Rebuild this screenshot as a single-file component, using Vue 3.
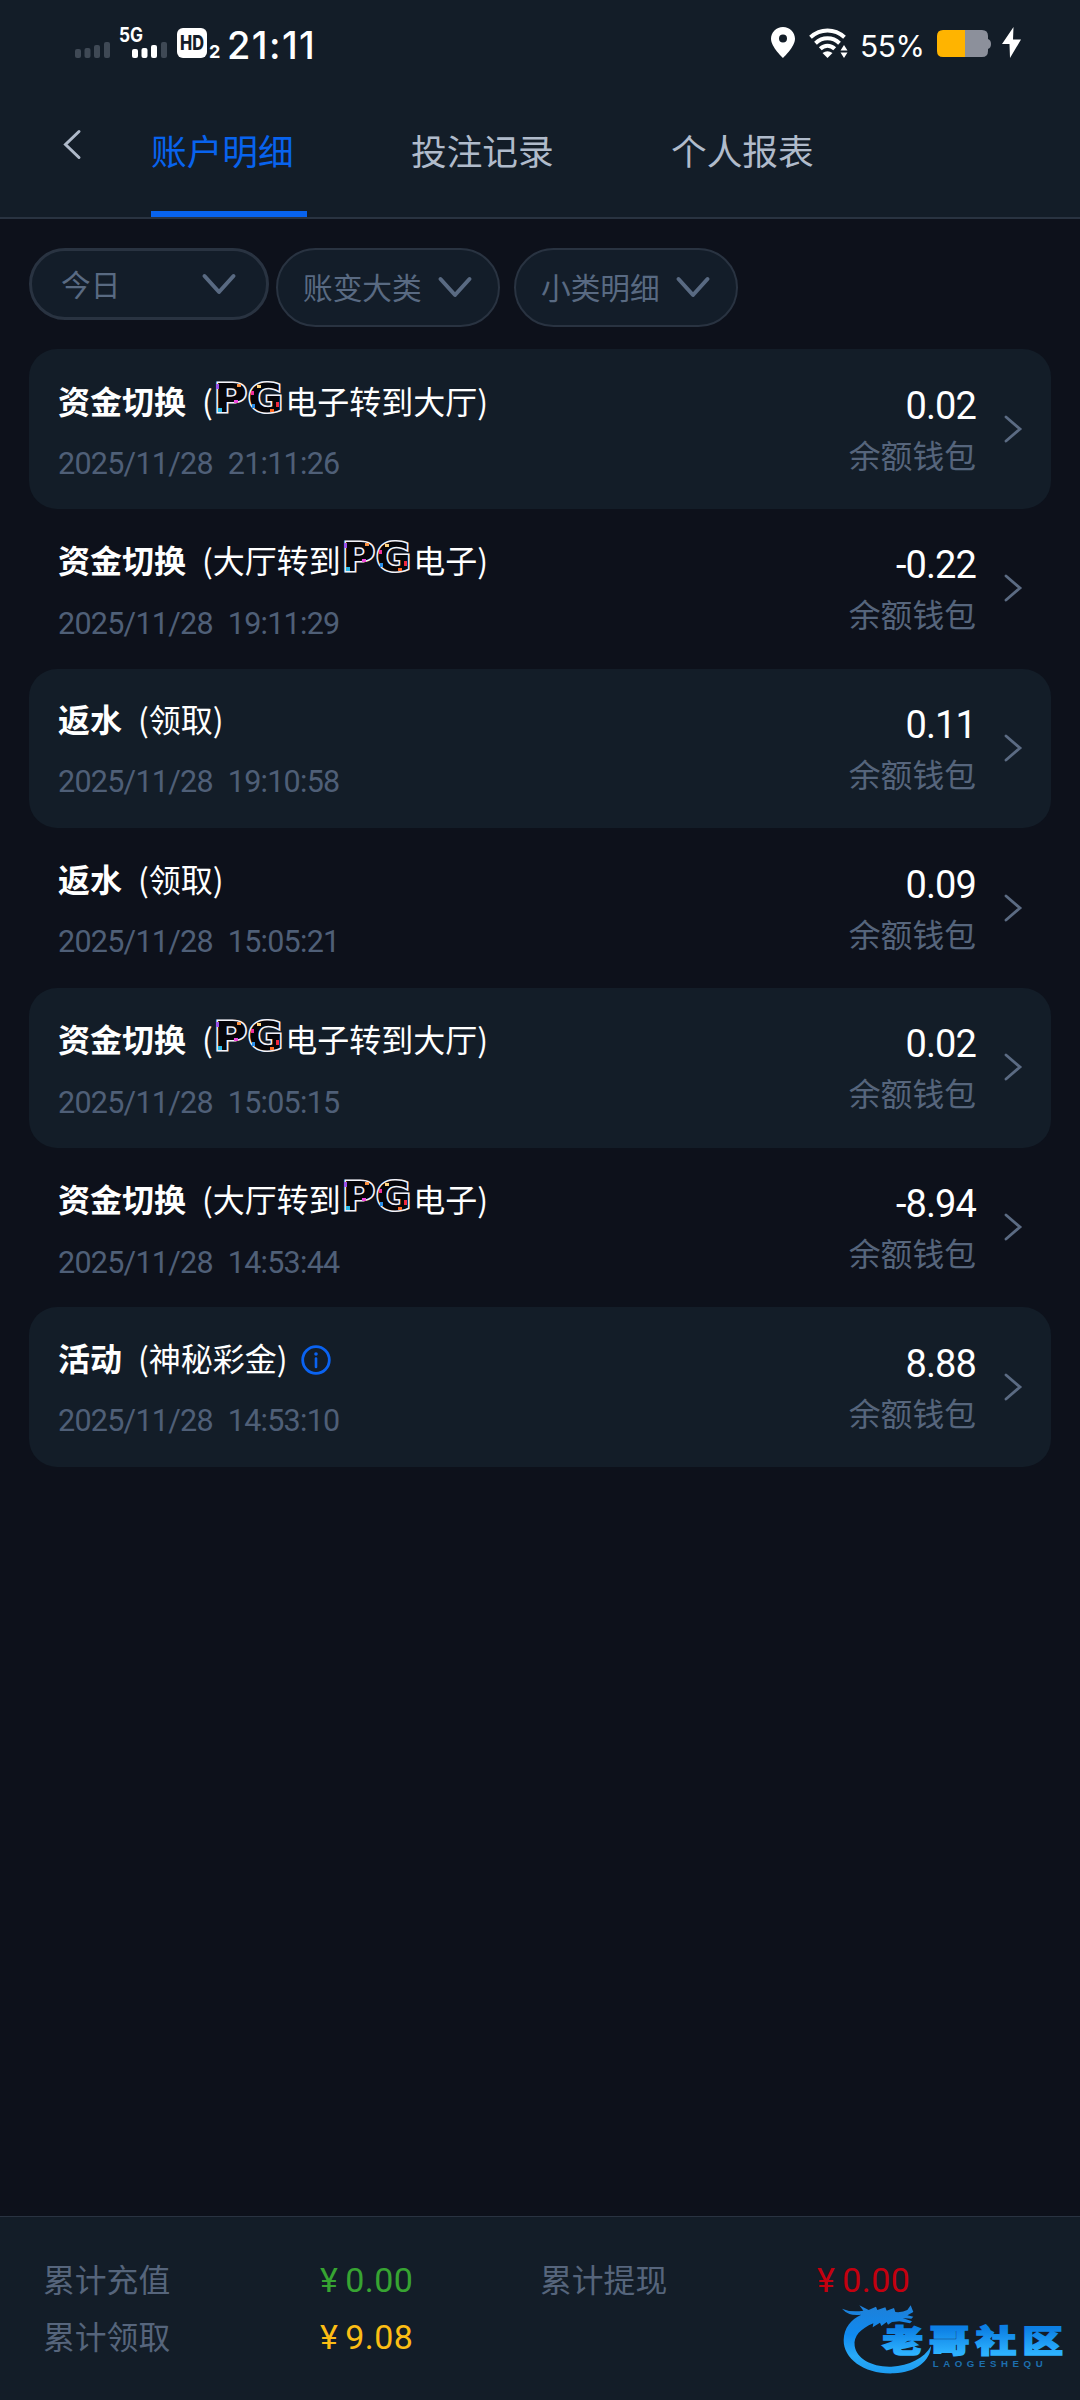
<script setup>
import { ref } from "vue";

const activeTab = ref(0);
const tabs = ["账户明细", "投注记录", "个人报表"];

const filters = [
  { label: "今日", wide: true },
  { label: "账变大类" },
  { label: "小类明细" },
];

// logo marks where the provider logo sits inside the brackets
const records = [
  { type: "资金切换", before: "(", logo: true, after: "电子转到大厅)", date: "2025/11/28", time: "21:11:26", amount: "0.02" },
  { type: "资金切换", before: "(大厅转到", logo: true, after: "电子)", date: "2025/11/28", time: "19:11:29", amount: "-0.22" },
  { type: "返水", before: "(领取)", date: "2025/11/28", time: "19:10:58", amount: "0.11" },
  { type: "返水", before: "(领取)", date: "2025/11/28", time: "15:05:21", amount: "0.09" },
  { type: "资金切换", before: "(", logo: true, after: "电子转到大厅)", date: "2025/11/28", time: "15:05:15", amount: "0.02" },
  { type: "资金切换", before: "(大厅转到", logo: true, after: "电子)", date: "2025/11/28", time: "14:53:44", amount: "-8.94" },
  { type: "活动", before: "(神秘彩金)", info: true, date: "2025/11/28", time: "14:53:10", amount: "8.88" },
];

const totals = [
  { label: "累计充值", value: "0.00", color: "green" },
  { label: "累计提现", value: "0.00", color: "red" },
  { label: "累计领取", value: "9.08", color: "yellow" },
];
</script>

<template>
  <div class="page">
    <header class="header">
      <div class="status">
        <svg class="status-left" width="150" height="40" viewBox="0 0 150 40">
          <g fill="#3f4955">
            <rect x="3" y="31" width="6" height="9" rx="2" />
            <rect x="12.5" y="30" width="6" height="10" rx="2" />
            <rect x="22" y="27" width="6" height="13" rx="2" />
            <rect x="32" y="24" width="6" height="16" rx="2" />
            <rect x="89" y="24" width="6" height="16" rx="2" />
          </g>
          <g fill="#fff">
            <rect x="60" y="31" width="6" height="9" rx="2" />
            <rect x="69.5" y="30" width="6" height="10" rx="2" />
            <rect x="79" y="27" width="6" height="13" rx="2" />
            <rect x="105" y="10" width="30" height="30" rx="6" />
            <text x="47" y="23.5" font-size="19.5" font-weight="700" textLength="24" lengthAdjust="spacingAndGlyphs">5G</text>
            <text x="137" y="40" font-size="18" font-weight="700">2</text>
          </g>
          <text x="108" y="32" font-size="19.5" font-weight="800" fill="#141d28" textLength="24" lengthAdjust="spacingAndGlyphs">HD</text>
        </svg>
        <span class="clock">21:11</span>
        <div class="status-right">
          <svg width="24" height="31" viewBox="0 0 24 31">
            <path d="M12 0C5.200 0 0 5.200 0 11.800C0 20 12 31 12 31S24 20 24 11.800C24 5.200 18.800 0 12 0ZM12 7.500A4 4 0 1 1 12 15.500A4 4 0 1 1 12 7.500Z" fill="#fff" fill-rule="evenodd" />
          </svg>
          <svg class="wifi" width="40" height="29" viewBox="0 0 40 29">
            <g fill="none" stroke="#fff" stroke-width="4">
              <path d="M1.500 8.200C11.500 -0.800 25.500 -0.800 35.500 8.200" />
              <path d="M6.500 14.200C13.500 7.600 23.500 7.600 30.500 14.200" />
              <path d="M11.300 19.800C15.500 15.700 21.500 15.700 25.700 19.800" />
            </g>
            <path d="M13.500 24Q18.500 20.500 23.500 24L18.500 29Z" fill="#fff" />
            <path d="M31.500 21.500L35 16L38.500 21.500ZM31.500 23.500L35 29L38.500 23.500Z" fill="#fff" />
          </svg>
          <span class="percent">55%</span>
          <svg class="battery" width="54" height="28" viewBox="0 0 54 28">
            <path d="M28 0H45Q51 0 51 6V9Q54 10 54 14T51 19V21Q51 27 45 27H28Z" fill="#8c909b" />
            <path d="M28 0H6Q0 0 0 6V21Q0 27 6 27H28Z" fill="#ffb400" />
          </svg>
          <svg class="bolt" width="19" height="31" viewBox="0 0 19 31">
            <path d="M11.500 0L0 17H7.500L8 31L19 12.500H11Z" fill="#fff" />
          </svg>
        </div>
      </div>
      <nav class="nav">
        <svg class="back" width="20" height="31" viewBox="0 0 20 31">
          <path d="M17 2.500L3.500 15.500L17 28.500" fill="none" stroke="#aeb9c9" stroke-width="3" stroke-linecap="round" />
        </svg>
        <button
          v-for="(tab, i) in tabs"
          :key="tab"
          class="tab"
          :class="{ active: activeTab === i }"
          @click="activeTab = i"
        >
          {{ tab }}
        </button>
      </nav>
    </header>

    <div class="filters">
      <div v-for="f in filters" :key="f.label" class="filter" :class="{ wide: f.wide }">
        <span>{{ f.label }}</span>
        <svg width="36" height="24" viewBox="0 0 36 24">
          <path d="M3.500 4L18 20L32.500 4" fill="none" stroke="#596a82" stroke-width="4" stroke-linecap="round" stroke-linejoin="round" />
        </svg>
      </div>
    </div>

    <main class="list">
      <div v-for="r in records" :key="r.time" class="record" :class="{ 'has-logo': r.logo }">
        <div class="left">
          <div class="title">
            <b>{{ r.type }}</b>
            <span>{{ r.before }}</span>
            <svg v-if="r.logo" class="pg" width="72" height="44" viewBox="0 -5 72 44">
              <g class="pg-text">
                <text x="0" y="31" textLength="33" lengthAdjust="spacingAndGlyphs">P</text>
                <text x="34" y="31" textLength="35" lengthAdjust="spacingAndGlyphs">G</text>
              </g>
              <rect x="2" y="3" width="3" height="5" fill="#9a52e8" />
              <rect x="23" y="3" width="4" height="3" fill="#ff9340" />
              <rect x="20" y="19" width="4" height="3" fill="#f04ae0" />
              <rect x="4" y="27" width="4" height="4" fill="#2bb9ea" />
              <rect x="43" y="4" width="4" height="3" fill="#ffd27a" />
              <rect x="37" y="10" width="3" height="4" fill="#ef2f9b" />
              <rect x="38" y="23" width="3" height="4" fill="#2b8fe8" />
              <rect x="56" y="28" width="4" height="3" fill="#ff6a24" />
              <rect x="62" y="21" width="3" height="5" fill="#f0283c" />
            </svg>
            <span v-if="r.after">{{ r.after }}</span>
            <svg v-if="r.info" class="info" width="30" height="30" viewBox="0 0 30 30">
              <circle cx="15" cy="15" r="13.300" fill="none" stroke="#0a63f2" stroke-width="2.800" />
              <circle cx="15" cy="9" r="1.800" fill="#0a63f2" />
              <path d="M15 13.500V22" stroke="#0a63f2" stroke-width="2.600" stroke-linecap="round" />
            </svg>
          </div>
          <div class="date">
            <span>{{ r.date }}</span>
            <span>{{ r.time }}</span>
          </div>
        </div>
        <div class="right">
          <div class="amount">{{ r.amount }}</div>
          <div class="wallet">余额钱包</div>
        </div>
        <svg class="arrow" width="20" height="30" viewBox="0 0 20 30">
          <path d="M3 3L17 15L3 27" fill="none" stroke="#5b6b83" stroke-width="2.800" stroke-linecap="round" />
        </svg>
      </div>
    </main>

    <footer class="footer">
      <div v-for="t in totals" :key="t.label" class="total">
        <span class="total-label">{{ t.label }}</span>
        <span class="total-value" :class="t.color"><i>¥</i>{{ t.value }}</span>
      </div>
    </footer>

    <svg class="watermark" width="260" height="100" viewBox="0 0 780 300">
      <defs>
        <linearGradient id="blue" x1="0" y1="40" x2="0" y2="250" gradientUnits="userSpaceOnUse">
          <stop offset="0" stop-color="#1f7fd6" />
          <stop offset="0.450" stop-color="#108af0" />
          <stop offset="0.750" stop-color="#28aaf8" />
          <stop offset="1" stop-color="#1e9cf0" />
        </linearGradient>
        <linearGradient id="word" x1="0" y1="105" x2="0" y2="200" gradientUnits="userSpaceOnUse">
          <stop offset="0.100" stop-color="#0c7fe4" />
          <stop offset="0.900" stop-color="#2db2ff" />
        </linearGradient>
      </defs>
      <!-- dragon: curled body, then head with whiskers -->
      <path
        d="M66 56Q92 68 130 62L118 46L146 60L168 50L172 60L196 52L200 62L222 54L226 66Q248 68 262 60L272 46L280 66L262 76L280 80L274 86L248 84L276 94L270 100L238 94L216 96L204 104L200 96L184 108L180 98L158 112L160 100C122 116 100 138 104 168C110 206 156 232 214 230C268 226 312 206 333 168C332 212 286 248 222 250C136 254 70 208 71 150C72 114 92 88 124 74Q88 80 66 56Z"
        fill="url(#blue)"
      />
      <text x="142" y="186" class="mark-text" transform="scale(1.320 1)" fill="url(#word)" stroke="url(#word)">老哥社区</text>
      <text x="338" y="230" class="mark-sub" textLength="330">LAOGESHEQU</text>
    </svg>
  </div>
</template>

<style>
body {
  margin: 0;
  background: #0d111b;
}
</style>

<style scoped>
.page {
  position: relative;
  display: flex;
  flex-direction: column;
  width: 1080px;
  height: 2400px;
  background: #0d111b;
  font-family: "Noto Sans CJK SC", sans-serif;
  color: #fff;
  overflow: hidden;
}

svg {
  display: block;
  flex: none;
  overflow: visible;
}

.header {
  height: 217px;
  background: #131d28;
  border-bottom: 2px solid #293341;
}

.status {
  display: flex;
  align-items: flex-end;
  height: 58px;
  padding-left: 72px;
}

.status text,
.clock {
  font-family: Inter, sans-serif;
}

.clock {
  margin-left: 5px;
  margin-bottom: -10px;
  font-size: 38px;
  font-weight: 500;
  line-height: 45px;
  letter-spacing: 1.400px;
}

.status-right {
  display: flex;
  align-items: flex-end;
  margin-left: auto;
  padding-right: 59px;
}

.wifi {
  margin-left: 14px;
}

.percent {
  width: 63px;
  margin: 0 14px -6px 11px;
  font-family: Inter, sans-serif;
  font-size: 30px;
  line-height: 36px;
  letter-spacing: -0.500px;
}

.bolt {
  margin-left: 11px;
}

.nav {
  display: flex;
  height: 159px;
}

.back {
  margin: 71px 69px 0 62px;
}

.tab {
  width: 156px;
  height: 159px;
  margin-right: 104px;
  padding: 65px 0 34px;
  border: 0;
  border-bottom: 6px solid transparent;
  background: none;
  color: #b0bbcb;
  font-family: inherit;
  font-size: 35.700px;
  line-height: 50px;
  text-align: left;
  white-space: nowrap;
}

.tab.active {
  color: #0863ee;
  border-bottom-color: #0863ee;
}

.filters {
  display: flex;
  align-items: flex-start;
  height: 101px;
  padding: 29px 29px 0;
  box-sizing: border-box;
  font-size: 29.700px;
  line-height: 40px;
  color: #596a82;
}

.filter {
  display: flex;
  align-items: center;
  justify-content: space-between;
  box-sizing: border-box;
  width: 224px;
  height: 79px;
  margin-right: 14px;
  padding: 0 25px 1px;
  border: 2px solid #293341;
  border-radius: 40px;
  background: #131d29;
}

.filter.wide {
  width: 240px;
  height: 72px;
  margin-right: 7px;
  padding: 0 29px;
  border-width: 3px;
}

.list {
  flex: 1;
  padding: 29.300px 29px 0;
}

.record {
  display: flex;
  box-sizing: border-box;
  height: 159.700px;
  padding: 29.300px 28px 0 29px;
  border-radius: 28px;
}

.record:nth-child(odd) {
  background: #131d28;
}

.left {
  flex: 1;
}

.has-logo .left {
  padding-top: 1px;
}

.title {
  display: flex;
  align-items: center;
  height: 40px;
  font-size: 32px;
  line-height: 40px;
  white-space: nowrap;
}

.title b {
  margin-right: 16px;
}

.pg {
  margin: -4px -1px 0 1.500px;
}

.pg-text {
  font-family: "DejaVu Sans", sans-serif;
  font-size: 39px;
  font-weight: 700;
  fill: #05050a;
  stroke: #f3f3fa;
  stroke-width: 3px;
  paint-order: stroke;
}

.info {
  margin: 6px 0 0 13.500px;
}

.date {
  display: flex;
  gap: 15px;
  margin-top: 26.500px;
  font-family: Roboto, sans-serif;
  font-size: 30.500px;
  line-height: 36px;
  letter-spacing: -0.750px;
  color: #4f5f77;
}

.right {
  padding-top: 5px;
  text-align: right;
}

.amount {
  font-family: Roboto, sans-serif;
  font-size: 38px;
  line-height: 44px;
  letter-spacing: -0.900px;
}

.wallet {
  margin-top: 6px;
  font-size: 31.800px;
  line-height: 40px;
  color: #56657c;
}

.arrow {
  margin: 35px 0 0 27px;
}

.footer {
  display: flex;
  flex-wrap: wrap;
  align-content: flex-start;
  box-sizing: border-box;
  height: 184px;
  padding: 37px 43px 0;
  border-top: 1px solid #293341;
  background: #131d28;
}

.total {
  display: flex;
  width: 497px;
  height: 56.500px;
  line-height: 48px;
}

.total-label {
  width: 277px;
  font-size: 31.800px;
  color: #56657c;
}

.total-value {
  padding-top: 2px;
  font-family: Roboto, sans-serif;
  font-size: 34px;
  letter-spacing: 0.400px;
}

.total-value i {
  margin-right: 7px;
  font-style: normal;
}

.green {
  color: #37a432;
}

.red {
  color: #c4000f;
}

.yellow {
  color: #fcbd14;
}

.watermark {
  position: absolute;
  left: 820px;
  top: 2290px;
}

.mark-text {
  font-size: 92px;
  font-weight: 900;
  letter-spacing: 14px;
  stroke-width: 5px;
}

.mark-sub {
  font-family: "Liberation Sans", sans-serif;
  font-size: 29px;
  font-weight: 700;
  fill: #1d6fae;
}
</style>
